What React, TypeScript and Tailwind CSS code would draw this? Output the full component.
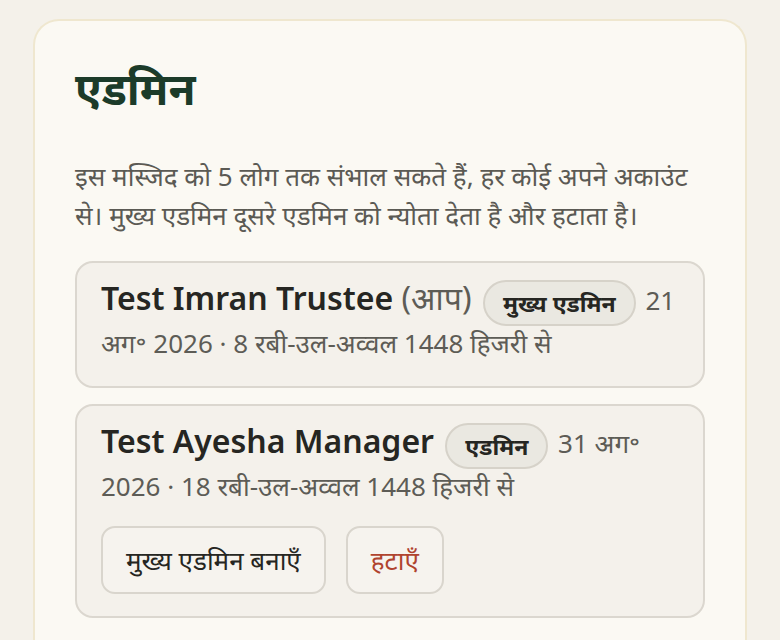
import React from "react";

function Badge({ children }: { children: React.ReactNode }) {
  return (
    <span className="mx-[3px] my-[-4px] inline-flex h-[46px] items-center rounded-full border-2 border-[#d6d2c9] bg-[#eae8e1] px-[18px] align-middle text-[23px] font-bold leading-none text-[#262622]">
      {children}
    </span>
  );
}

function Meta({
  name,
  you,
  badge,
  date,
}: {
  name: string;
  you?: boolean;
  badge: string;
  date: string;
}) {
  return (
    <div className="text-[26px] leading-[42px] text-[#5d5c56]">
      <span className="text-[32px] font-semibold leading-[42px] text-[#262622]">{name} </span>
      {you && <span className="text-[32px] leading-[42px] text-[#5d5c56]">(आप) </span>}
      <Badge>{badge}</Badge> {date}
    </div>
  );
}

export default function App() {
  return (
    <div className="min-h-screen bg-[#f4f1ea] px-[33px] pt-[19px] font-['Noto_Sans','Noto_Sans_Devanagari',sans-serif]">
      <div className="rounded-t-[26px] border-2 border-b-0 border-[#efe7cf] bg-[#fbf9f3] px-[40px] pb-[24px] pt-[41px]">
        <h1 className="text-[44px] font-bold leading-[52px] text-[#1c3b29]">एडमिन</h1>
        <p className="mt-[43px] text-[26px] leading-[39px] text-[#5b5a54]">
          इस मस्जिद को 5 लोग तक संभाल सकते हैं, हर कोई अपने अकाउंट से। मुख्य एडमिन दूसरे एडमिन को न्योता देता है और हटाता है।
        </p>
        <div className="mt-[26px] flex flex-col gap-[16px]">
          <div className="rounded-[18px] border-2 border-[#dbd7cf] bg-[#f4f1eb] px-[24px] pb-[22px] pt-[14px]">
            <Meta
              name="Test Imran Trustee"
              you
              badge="मुख्य एडमिन"
              date="21 अग॰ 2026 · 8 रबी-उल-अव्वल 1448 हिजरी से"
            />
          </div>
          <div className="rounded-[18px] border-2 border-[#dbd7cf] bg-[#f4f1eb] px-[24px] pb-[22px] pt-[14px]">
            <Meta
              name="Test Ayesha Manager"
              badge="एडमिन"
              date="31 अग॰ 2026 · 18 रबी-उल-अव्वल 1448 हिजरी से"
            />
            <div className="mt-[19px] flex gap-[20px]">
              <button className="h-[68px] rounded-[14px] border-2 border-[#d9d5cd] bg-[#f6f3ee] px-[23px] text-[26px] text-[#262622]">
                मुख्य एडमिन बनाएँ
              </button>
              <button className="h-[68px] rounded-[14px] border-2 border-[#d9d5cd] bg-[#f6f3ee] px-[23px] text-[26px] text-[#b0432e]">
                हटाएँ
              </button>
            </div>
          </div>
        </div>
      </div>
    </div>
  );
}
